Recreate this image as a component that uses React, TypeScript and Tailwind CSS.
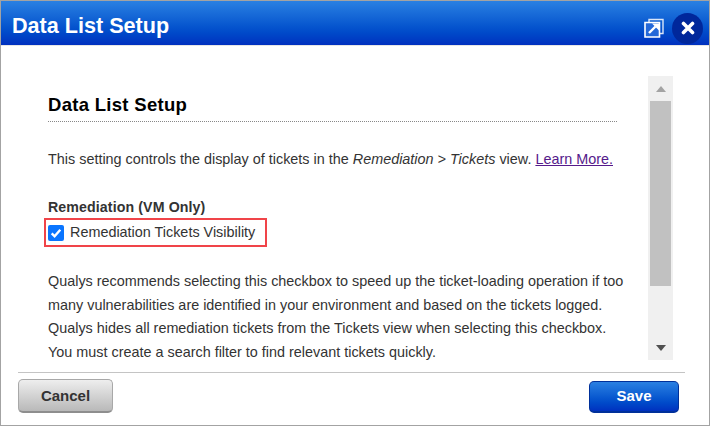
export default function App() {
  return (
    <div className="w-[710px] h-[426px] flex flex-col bg-white border border-[#a3a3a3] font-['Liberation_Sans',Arial,sans-serif] overflow-hidden">
      <div className="h-[44px] shrink-0 flex items-center justify-between bg-gradient-to-b from-[#2a80e2] to-[#0030bf] pl-[11px] pr-[6px]">
        <span className="text-white font-bold text-[21.6px] leading-none mt-[5px]">Data List Setup</span>
        <div className="flex items-center gap-[8px] mt-[10px]">
          <svg width="20" height="20" viewBox="0 0 20 20" fill="none">
            <path d="M5 1.5H19V15.5H5Z" stroke="#fff" strokeWidth="1.4" opacity="0.85" />
            <path d="M1 4.5H15.5V19H1Z" fill="#2468d8" stroke="#fff" strokeWidth="1.6" />
            <path d="M5 15L11.5 8.5" stroke="#fff" strokeWidth="2.4" />
            <path d="M8 5.5H15V12.5Z" fill="#fff" />
          </svg>
          <div className="w-[31px] h-[31px] rounded-full bg-[#00279b] flex items-center justify-center">
            <svg width="14" height="14" viewBox="0 0 14 14">
              <path d="M2.5 2.5L11.5 11.5M11.5 2.5L2.5 11.5" stroke="#fff" strokeWidth="3.6" strokeLinecap="round" />
            </svg>
          </div>
        </div>
      </div>
      <div className="flex-1 min-h-0 flex border-t border-[#e6e6e6] pl-[47px] pr-[36px] pt-[30px]">
        <div className="w-[569px] shrink-0 text-[#333]">
          <h1 className="text-[18.5px] leading-[21px] font-bold text-black tracking-[0.3px] pt-[18px] pb-[6px] border-b border-dotted border-[#888]">Data List Setup</h1>
          <p className="text-[14.4px] leading-[20px] mt-[27px]">
            This setting controls the display of tickets in the <i>Remediation &gt; Tickets</i> view.{" "}
            <span className="underline text-[#551a8b]">Learn More.</span>
          </p>
          <p className="text-[14.2px] leading-[16px] font-bold mt-[30px] tracking-[0.1px]">Remediation (VM Only)</p>
          <div className="mt-[3px] -ml-[4px] w-[223px] h-[29px] flex items-center border-2 border-[#f04449] pl-[2px]">
            <span className="w-[16px] h-[16px] rounded-[2px] bg-[#0a75ff] flex items-center justify-center">
              <svg width="14" height="14" viewBox="0 0 13 13" fill="none">
                <path d="M2.5 6.8L5.2 9.6L10.5 3.4" stroke="#fff" strokeWidth="2.2" />
              </svg>
            </span>
            <span className="text-[14.4px] ml-[6px] whitespace-nowrap">Remediation Tickets Visibility</span>
          </div>
          <p className="text-[14.4px] leading-[23.7px] mt-[23px] whitespace-nowrap">
            Qualys recommends selecting this checkbox to speed up the ticket-loading operation if too<br />
            many vulnerabilities are identified in your environment and based on the tickets logged.<br />
            Qualys hides all remediation tickets from the Tickets view when selecting this checkbox.<br />
            You must create a search filter to find relevant tickets quickly.
          </p>
        </div>
        <div className="ml-[31px] w-[25px] h-[284px] shrink-0 bg-[#f0f0f0] flex flex-col items-center">
          <div className="h-[25px] shrink-0 flex items-center justify-center">
            <div className="w-0 h-0 border-x-[5.5px] border-x-transparent border-b-[6px] border-b-[#a3a3a3]" />
          </div>
          <div className="w-[21px] h-[185px] bg-[#c1c1c1]" />
          <div className="mt-auto h-[25px] shrink-0 flex items-center justify-center">
            <div className="w-0 h-0 border-x-[5.5px] border-x-transparent border-t-[6px] border-t-[#505050]" />
          </div>
        </div>
      </div>
      <div className="ml-[17px] mr-[24px] h-[53px] shrink-0 border-t border-[#c4c4c4] flex items-start justify-between pt-[6px] pr-[6px]">
        <button className="w-[95px] h-[34px] pt-[2px] rounded-[5px] border border-[#a8a8a8] border-b-2 border-b-[#8e8e8e] bg-gradient-to-b from-[#eeeeee] to-[#b9b9b9] text-[#333] font-bold text-[15px]">Cancel</button>
        <button className="w-[90px] h-[32px] mt-[2px] rounded-[5px] border border-[#00309a] border-b-2 bg-gradient-to-b from-[#2a80e2] to-[#0030bf] text-white font-bold text-[15px]">Save</button>
      </div>
    </div>
  );
}
